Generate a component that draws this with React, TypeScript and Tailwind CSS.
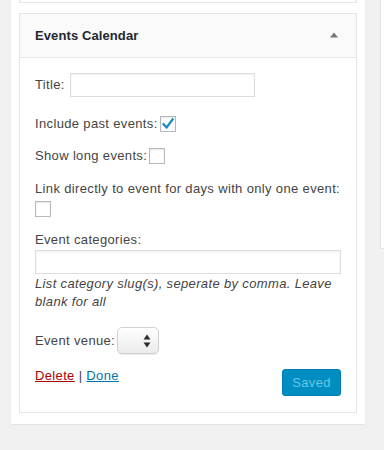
import React from "react";

export default function App() {
  return (
    <div className="h-[450px] w-[384px] bg-[#f1f1f1] flex items-start overflow-hidden font-['Liberation_Sans',Arial,sans-serif] text-[13px] text-[#444]">
      <div className="ml-[11px] w-[354px] bg-white px-[8px] pb-[11px] shadow-[0_1px_1px_rgba(0,0,0,0.06)]">
        <div className="h-[3px] border-x border-b border-[#e5e5e5] bg-white" />
        <div className="mt-[10px] border border-[#e5e5e5] bg-white">
          <div className="h-[44px] border-b border-[#e5e5e5] bg-[#fafafa] flex items-center justify-between pl-[15px] pr-[18px]">
            <span className="text-[13px] font-bold text-[#23282d] tracking-[0.1px]">Events Calendar</span>
            <svg width="8" height="6" viewBox="0 0 8 6" className="mt-[-1px]">
              <polygon points="4,0.5 8,5.5 0,5.5" fill="#72777c" />
            </svg>
          </div>
          <div className="px-[15px] pt-[15px] pb-[16px] tracking-[0.35px]">
            <div className="flex items-center h-[24px]">
              <span>Title:</span>
              <input type="text" className="ml-[5px] h-[24px] w-[185px] border border-[#ddd] bg-white shadow-[inset_0_1px_2px_rgba(0,0,0,0.07)] outline-none" />
            </div>
            <div className="mt-[19px] flex items-center h-[16px]">
              <span>Include past events:</span>
              <span className="ml-[2px] relative h-[16px] w-[16px] border border-[#b4b9be] bg-white shadow-[inset_0_1px_2px_rgba(0,0,0,0.1)]">
                <svg width="16" height="16" viewBox="0 0 16 16" className="absolute left-[-1px] top-[-1px]">
                  <path d="M3.6 8.2 L6.6 11.4 L12.6 3.4" fill="none" stroke="#1e8cbe" strokeWidth="2.3" strokeLinecap="square" strokeLinejoin="miter" />
                </svg>
              </span>
            </div>
            <div className="mt-[16px] flex items-center h-[16px]">
              <span>Show long events:</span>
              <span className="ml-[2px] h-[16px] w-[16px] border border-[#b4b9be] bg-white shadow-[inset_0_1px_2px_rgba(0,0,0,0.1)]" />
            </div>
            <div className="mt-[16px] leading-[18px]">Link directly to event for days with only one event:</div>
            <div className="mt-[3px] h-[16px] w-[16px] border border-[#b4b9be] bg-white shadow-[inset_0_1px_2px_rgba(0,0,0,0.1)]" />
            <div className="mt-[14px] leading-[18px]">Event categories:</div>
            <input type="text" className="mt-[1px] block h-[24px] w-full border border-[#ddd] bg-white shadow-[inset_0_1px_2px_rgba(0,0,0,0.07)] outline-none" />
            <div className="mt-[1px] leading-[18px] italic">List category slug(s), seperate by comma. Leave blank for all</div>
            <div className="mt-[16px] flex items-center h-[27px]">
              <span>Event venue:</span>
              <div className="ml-[2px] relative h-[27px] w-[42px] rounded-[5px] border border-[#d0d0d0] bg-gradient-to-b from-white to-[#ebebeb] shadow-[0_1px_1px_rgba(0,0,0,0.08)]">
                <svg width="8" height="14" viewBox="0 0 8 14" className="absolute left-[25px] top-[6px]">
                  <polygon points="4,0.5 7.5,5.5 0.5,5.5" fill="#2c2c2c" />
                  <polygon points="0.5,8.5 7.5,8.5 4,13.5" fill="#2c2c2c" />
                </svg>
              </div>
            </div>
            <div className="mt-[15px] flex justify-between items-start h-[27px]">
              <div className="mt-[-2px] leading-[18px] text-[#444]">
                <a href="#" className="text-[#a00] underline">Delete</a>
                <span> | </span>
                <a href="#" className="text-[#0073aa] underline">Done</a>
              </div>
              <button className="h-[27px] w-[59px] rounded-[3px] border border-[#007cb2] bg-[#008ec2] text-[13px] text-[#66c6e4] leading-[25px] tracking-[0.35px]">Saved</button>
            </div>
          </div>
        </div>
      </div>
      <div className="ml-[15px] h-[249px] flex-1 border-l border-b border-[#e5e5e5] bg-white" />
    </div>
  );
}
